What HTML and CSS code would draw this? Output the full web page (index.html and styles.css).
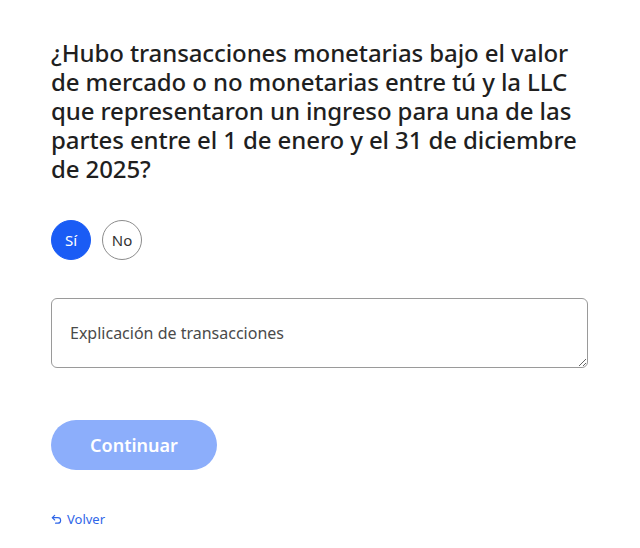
FILE: index.html
```html
<!DOCTYPE html>
<html lang="es">
<head>
	<meta charset="UTF-8">
	<title>Transacciones</title>
	<link rel="stylesheet" href="styles.css">
</head>
<body>
	<div id="page">
		<h1 class="question">¿Hubo transacciones monetarias bajo el valor de mercado o no monetarias entre tú y la LLC que representaron un ingreso para una de las partes entre el 1 de enero y el 31 de diciembre de 2025?</h1>
		<div class="choices">
			<button class="choice choice-active">Sí</button>
			<button class="choice">No</button>
		</div>
		<textarea class="explain" placeholder="Explicación de transacciones"></textarea>
		<button class="btn-continue">Continuar</button>
		<a class="back" href="javascript:;">
			<svg width="11" height="11" viewBox="0 0 12 12" fill="none" stroke="currentColor" stroke-width="1.3" stroke-linecap="round" stroke-linejoin="round">
				<path d="M4 1.5 L1.5 4 L4 6.5"/>
				<path d="M1.5 4 H7.5 A3 3 0 0 1 7.5 10 H5"/>
			</svg>
			Volver
		</a>
	</div>
</body>
</html>
```

FILE: styles.css
```css
body{
	margin: 0;
	background: #fff;
	font-family: "Noto Sans", "Open Sans", sans-serif;
	color: #1f1f1f;
}
#page{
	padding: 38px 52px 0 51px;
}
.question{
	margin: 0;
	font-size: 24px;
	font-weight: 500;
	line-height: 29px;
	letter-spacing: -0.1px;
}
.choices{
	display: flex;
	gap: 11px;
	margin-top: 37px;
}
.choice{
	width: 40px;
	height: 40px;
	padding: 0;
	border: 1px solid #8c8c8c;
	border-radius: 50%;
	background: #fff;
	font-family: inherit;
	font-size: 15px;
	color: #333;
	cursor: pointer;
}
.choice-active{
	background: #1a5cf5;
	border-color: #1a5cf5;
	color: #fff;
}
.explain{
	display: block;
	box-sizing: border-box;
	width: 100%;
	height: 70px;
	margin-top: 38px;
	padding: 24px 18px;
	border: 1px solid #9a9a9a;
	border-radius: 6px;
	font-family: inherit;
	font-size: 16px;
	line-height: 20px;
	color: #333;
}
.explain::placeholder{
	color: #4a4a4a;
}
.btn-continue{
	display: block;
	width: 166px;
	height: 50px;
	margin-top: 52px;
	border: 0;
	border-radius: 25px;
	background: #8caefb;
	font-family: inherit;
	font-size: 18px;
	font-weight: 600;
	color: #fff;
}
.back{
	display: inline-flex;
	align-items: center;
	gap: 5px;
	margin-top: 40px;
	font-size: 13px;
	color: #2f66e8;
	text-decoration: none;
}
```
